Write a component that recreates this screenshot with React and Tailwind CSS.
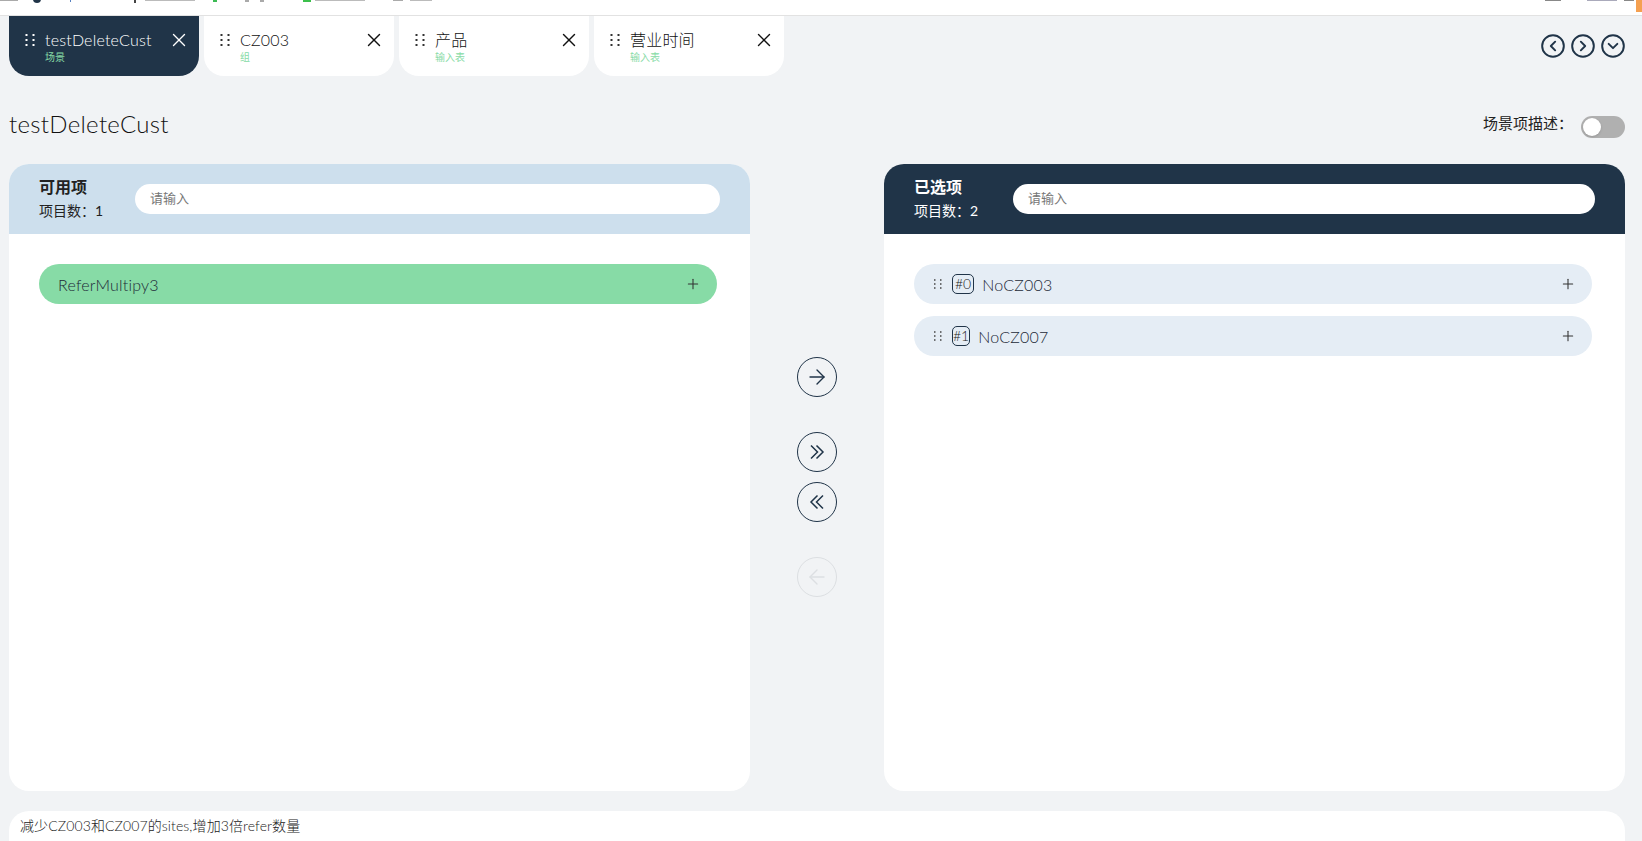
import React from "react";
import { X, Plus, ArrowRight, ArrowLeft, CircleChevronLeft, CircleChevronRight, CircleChevronDown } from "lucide-react";

const FONT = "font-['Lato','Noto_Sans_CJK_SC',sans-serif]";

function Dots({ className }) {
  return (
    <svg width="10" height="12" viewBox="0 0 10 12" className={className} fill="currentColor">
      {[1, 6, 11].map((y) => (
        <g key={y}>
          <rect x="0.5" y={y - 1} width="2" height="2" />
          <rect x="7.5" y={y - 1} width="2" height="2" />
        </g>
      ))}
    </svg>
  );
}

function SmallDots() {
  return (
    <svg width="8" height="10" viewBox="0 0 8 10" className="text-[#444] shrink-0" fill="currentColor">
      {[1, 5, 9].map((y) => (
        <g key={y}>
          <rect x="0" y={y - 0.75} width="1.5" height="1.5" />
          <rect x="6" y={y - 0.75} width="1.5" height="1.5" />
        </g>
      ))}
    </svg>
  );
}

function DoubleChevron({ left }) {
  return (
    <svg width="16" height="16" viewBox="0 0 16 16" fill="none" stroke="currentColor" strokeWidth="1.5" className={left ? "-scale-x-100" : ""}>
      <path d="M2 1.5 L8.5 8 L2 14.5" />
      <path d="M7.5 1.5 L14 8 L7.5 14.5" />
    </svg>
  );
}

function Tab({ label, sub, active }) {
  return (
    <div className={`relative w-[190px] h-[60px] rounded-b-[20px] flex items-start pt-[15px] pl-[16px] pr-[9px] ${active ? "bg-[#203448] text-white" : "bg-white text-[#111]"}`}>
      <Dots className={`mt-[3px] shrink-0 ${active ? "text-white" : "text-[#333]"}`} />
      <div className="ml-[10px] flex-1 min-w-0">
        <div className="text-[16px] leading-[18px] font-light tracking-[0.2px] whitespace-nowrap">{label}</div>
        <div className="text-[10px] leading-[12px] mt-[2px] text-[#87dba6]">{sub}</div>
      </div>
      <X size={22} strokeWidth={1.5} className="shrink-0 -mt-[2px]" />
    </div>
  );
}

function Round({ children, disabled, className = "" }) {
  return (
    <div className={`w-[40px] h-[40px] rounded-full border flex items-center justify-center ${disabled ? "border-[#dcdfe2] text-[#dcdfe2]" : "border-[#203448] text-[#203448]"} ${className}`}>
      {children}
    </div>
  );
}

function Row({ idx, name, green }) {
  return (
    <div className={`h-[40px] rounded-[20px] flex items-center pr-[16px] ${green ? "bg-[#87dba6] pl-[19px]" : "bg-[#e5edf5] pl-[20px]"}`}>
      {!green && <SmallDots />}
      {idx && (
        <span className={`ml-[10px] h-[20px] border border-[#203448] rounded-[5px] text-[14px] leading-[18px] font-light text-[#222] ${idx === "#0" ? "px-[2px]" : "px-0"}`}>{idx}</span>
      )}
      <span className={`text-[16px] font-light tracking-[0.2px] text-[#1d2a38] mt-[1px] ${idx ? "ml-[8px]" : ""}`}>{name}</span>
      <Plus size={16} strokeWidth={1.6} className="ml-auto text-[#333]" />
    </div>
  );
}

function Panel({ title, count, dark, children }) {
  return (
    <div className="flex-1 min-w-0 bg-white rounded-[20px] overflow-hidden flex flex-col">
      <div className={`h-[70px] flex items-center pl-[30px] pr-[30px] shrink-0 ${dark ? "bg-[#203448] text-white" : "bg-[#cddfed] text-[#222]"}`}>
        <div className="w-[96px] shrink-0 -mt-[2px]">
          <div className="text-[16px] leading-[20px] font-bold">{title}</div>
          <div className="text-[14px] leading-[18px] mt-[5px] whitespace-nowrap">{"项目数\uFF1A"}{count}</div>
        </div>
        <div className={`flex-1 h-[30px] bg-white rounded-[15px] flex items-center pl-[15px] text-[13px] text-[#777] ${dark ? "ml-[3px]" : ""}`}>请输入</div>
      </div>
      <div className="flex-1 pt-[30px] pl-[30px] pr-[33px] flex flex-col gap-[12px]">{children}</div>
    </div>
  );
}

function Chrome() {
  return (
    <div className="h-[16px] shrink-0 bg-white border-b border-[#e2e2e2] relative overflow-hidden">
      <span className="absolute left-0 top-0 w-[18px] h-[1px] bg-[#aaa]" />
      <span className="absolute left-[33px] -top-[5px] w-[8px] h-[8px] rounded-full bg-[#203448]" />
      <span className="absolute left-[70px] top-0 w-[1px] h-[2px] bg-[#5580c0]" />
      <span className="absolute left-[134px] top-0 w-[2px] h-[3px] bg-[#444]" />
      <span className="absolute left-[145px] top-0 w-[50px] h-[1px] bg-[#bbb]" />
      <span className="absolute left-[213px] top-0 w-[4px] h-[2px] bg-[#3cba54]" />
      <span className="absolute left-[245px] top-0 w-[4px] h-[2px] bg-[#aaa]" />
      <span className="absolute left-[260px] top-0 w-[4px] h-[2px] bg-[#aaa]" />
      <span className="absolute left-[303px] top-0 w-[8px] h-[2px] bg-[#3cc04c]" />
      <span className="absolute left-[315px] top-0 w-[50px] h-[1px] bg-[#bbb]" />
      <span className="absolute left-[393px] top-0 w-[10px] h-[1px] bg-[#aaa]" />
      <span className="absolute left-[410px] top-0 w-[22px] h-[1px] bg-[#bbb]" />
      <span className="absolute left-[1545px] top-0 w-[16px] h-[1px] bg-[#888]" />
      <span className="absolute left-[1587px] top-0 w-[30px] h-[1px] bg-[#aab]" />
      <span className="absolute left-[1624px] top-0 w-[10px] h-[1px] bg-[#888]" />
      <span className="absolute left-[1636px] top-0 w-[6px] h-[12px] bg-[#f5a050]" />
    </div>
  );
}

export default function App() {
  return (
    <div className={`h-[841px] w-[1642px] overflow-hidden bg-[#f1f3f5] flex flex-col ${FONT}`}>
      <Chrome />
      <div className="flex items-start pl-[9px] pr-[17px] shrink-0">
        <div className="flex gap-[5px]">
          <Tab label="testDeleteCust" sub="场景" active />
          <Tab label="CZ003" sub="组" />
          <Tab label="产品" sub="输入表" />
          <Tab label="营业时间" sub="输入表" />
        </div>
        <div className="ml-auto flex gap-[4px] text-[#203448] mt-[17px] -mr-[1px]">
          <CircleChevronLeft size={26} strokeWidth={1.8} />
          <CircleChevronRight size={26} strokeWidth={1.8} />
          <CircleChevronDown size={26} strokeWidth={1.8} />
        </div>
      </div>
      <div className="flex items-center pl-[9px] pr-[17px] h-[88px] shrink-0">
        <h1 className="text-[24px] font-light tracking-[0.3px] text-[#111] mt-[8px]">testDeleteCust</h1>
        <span className="ml-auto text-[15px] text-[#222] mt-[6px]">{"场景项描述\uFF1A"}</span>
        <div className="ml-[8px] mt-[14px] w-[44px] h-[22px] rounded-full bg-[#b0b0b0] p-[2px]">
          <div className="w-[18px] h-[18px] rounded-full bg-white shadow" />
        </div>
      </div>
      <div className="flex pl-[9px] pr-[17px] h-[627px] shrink-0">
        <Panel title="可用项" count="1">
          <Row name="ReferMultipy3" green />
        </Panel>
        <div className="w-[134px] shrink-0 flex flex-col items-center pt-[193px]">
          <Round><ArrowRight size={24} strokeWidth={1.4} /></Round>
          <Round className="mt-[35px]"><DoubleChevron /></Round>
          <Round className="mt-[10px]"><DoubleChevron left /></Round>
          <Round disabled className="mt-[35px]"><ArrowLeft size={24} strokeWidth={1.4} /></Round>
        </div>
        <Panel title="已选项" count="2" dark>
          <Row idx="#0" name="NoCZ003" />
          <Row idx="#1" name="NoCZ007" />
        </Panel>
      </div>
      <div className="ml-[9px] mr-[17px] mt-[20px] h-[40px] shrink-0 bg-white rounded-t-[20px] pl-[11px] pt-[5px] text-[14px] leading-[20px] font-light tracking-[0.1px] text-[#222]">
        减少CZ003和CZ007的sites,增加3倍refer数量
      </div>
    </div>
  );
}
